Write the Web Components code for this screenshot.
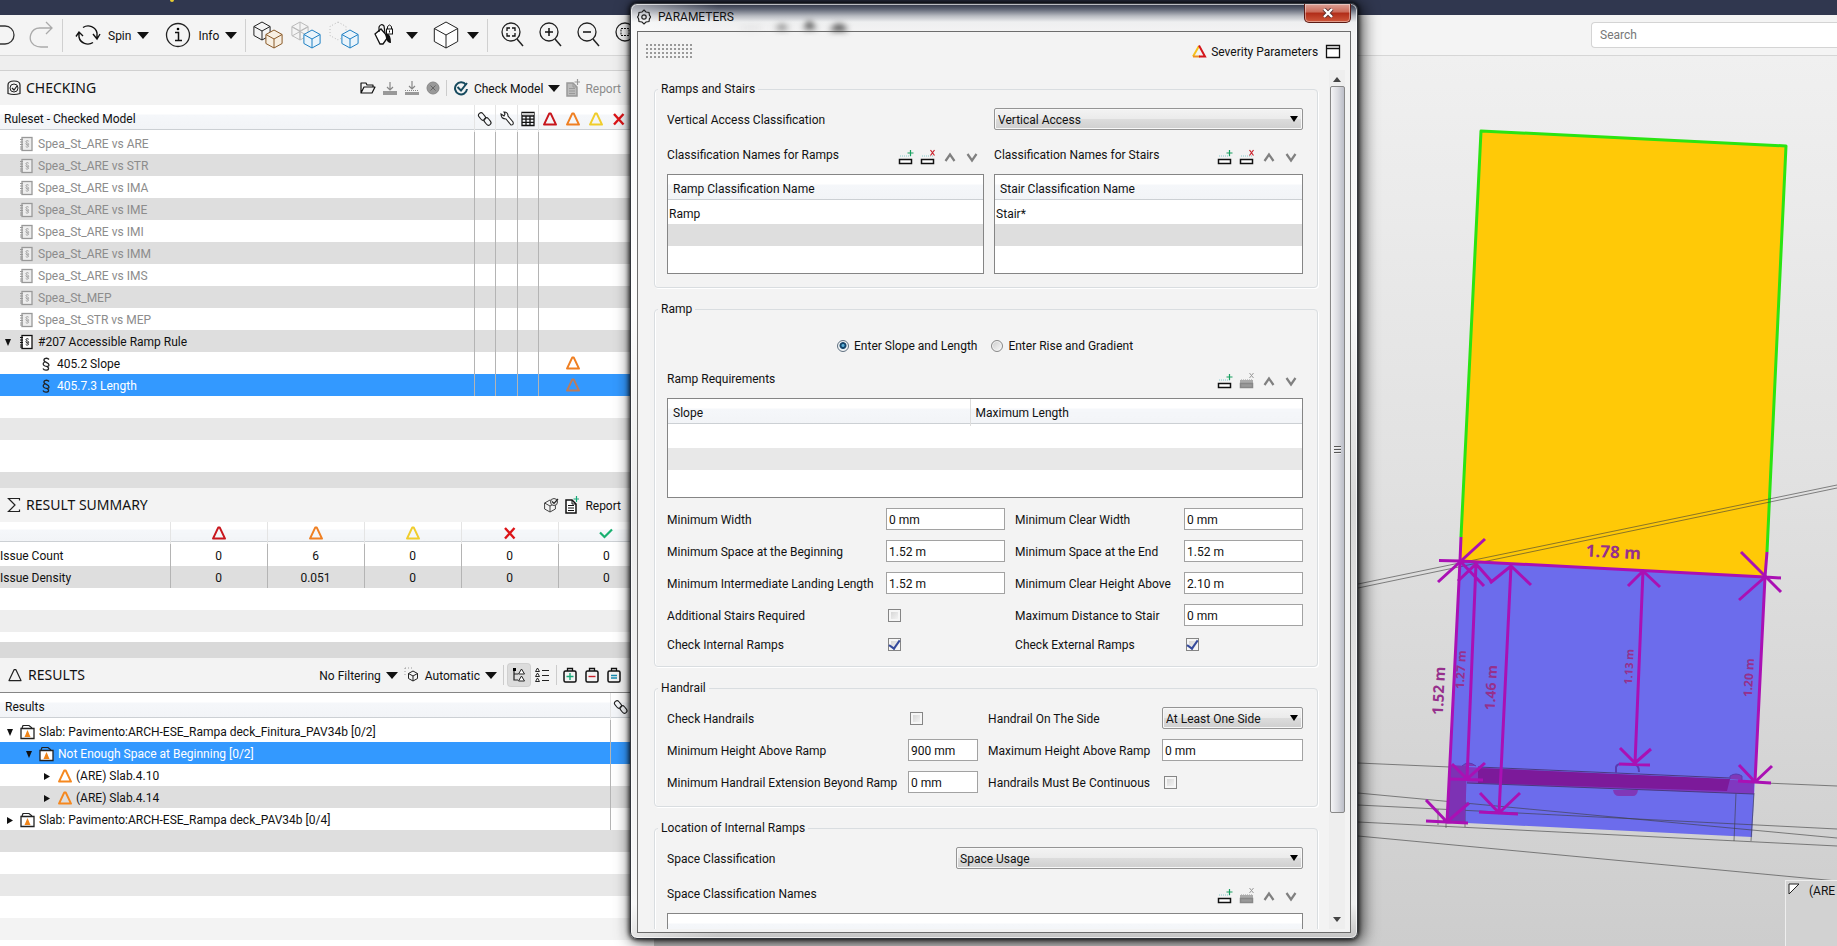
<!DOCTYPE html>
<html lang="en">
<head>
<meta charset="utf-8">
<title>Model Checking</title>
<style>
html,body{margin:0;height:100%}
body{font:12px/16px Roboto,"Noto Sans",sans-serif;color:#111;background:#f4f4f4;overflow:hidden}
</style>
</head>
<body>
<checker-app></checker-app>
<script>
const base = `*{box-sizing:border-box}
button{font:inherit;color:inherit;background:none;border:0;padding:0;margin:0;display:inline-flex;align-items:center;white-space:nowrap}
button span{padding-top:1px}
ui-icon{flex:none}`;

function define(name, html, setup) {
  const tpl = document.createElement('template');
  customElements.define(name, class extends HTMLElement {
    connectedCallback() {
      if (this.shadowRoot) return;
      const root = this.attachShadow({ mode: 'open' });
      tpl.innerHTML = '<style>' + base + '</style>' + (typeof html === 'function' ? html(this) : html);
      root.append(tpl.content.cloneNode(true));
      if (setup) setup(this, root);
    }
  });
}

/* ---------- icons: [width, height, markup] ---------- */
const tri = (c, w = 2) => [16, 16, `<path d="M7.2 2.6h1.6L14 13.6H2z" fill="none" stroke="${c}" stroke-width="${w}" stroke-linejoin="round"/>`];
const cubeAt = (x, y, r, c, fill = '#f4f4f4') => {
  const h = Math.round(r * 9) / 10, q = r / 2;
  return `<path d="M${x} ${y - r}l${h} ${q}v${r}l${-h} ${q}l${-h} ${-q}v${-r}z" fill="${fill}" stroke="${c}"/><path d="M${x - h} ${y - q}l${h} ${q}l${h} ${-q}M${x} ${y}v${r}" fill="none" stroke="${c}"/>`;
};
const lens = inner => [24, 26, `<circle cx="11" cy="10" r="9" fill="none" stroke="#222" stroke-width="1.3"/><path d="M17 17l6 7" stroke="#222" stroke-width="1.5"/>${inner}`];
const bag = (c, d) => [14, 16, `<rect x="1" y="4" width="12" height="11" rx="1.5" fill="none" stroke="#111" stroke-width="1.5"/><path d="M4.500 4V1.500h5V4" fill="none" stroke="#111" stroke-width="1.3"/><path d="${d}" stroke="${c}" stroke-width="1.4" fill="none"/>`];
const book = (c, f) => [14, 16, `<rect x="3" y="1.500" width="10" height="13" fill="${f}" stroke="${c}" stroke-width="1.300"/><path d="M1 3.500h3M1 6h3M1 8.500h3M1 11h3M1 13h3" stroke="${c}"/><path d="M9.700 5.300c-.6-1-3-.8-2.800.5.200 1.200 3 1.200 2.800 2.500-.1.900-1.800.9-2.400.3M7.300 7c-.9 1 .2 1.800 1.200 2.100 1.700.6 1.200 2-.2 2-.8 0-1.300-.300-1.600-.700" fill="none" stroke="${c}" stroke-width=".9"/>`];
const row = (box, mark, fill, dots) => [16, 18, `<path d="M2 8h11" stroke="${dots}" stroke-dasharray="1 1"/>${fill}<rect x="1.500" y="11.500" width="12" height="4" fill="${fill ? '#999' : '#fff'}" stroke="${box}" stroke-width="1.500"/>${mark}`];
const doc = (c, p) => [14, 18, `<path d="M1 4h6l4 4v9H1z" fill="${c === '#999' ? '#bbb' : '#fff'}" stroke="${c}" stroke-width="1.500"/><path d="M7 4v4h4M3 9.500h6M3 12h6M3 14.500h6" stroke="${c}" fill="none"/><path d="M11.500 0v6M8.500 3h6" stroke="${p}" stroke-width="1.200"/>`];
const folderTri = [16, 16, `<path d="M1 4.500h13v10H1z" fill="#fff" stroke="#222" stroke-width="1.300"/><path d="M2 4l1-2.500h6L12 4" fill="none" stroke="#222" stroke-width="1.200"/><path d="M7.500 6l3 7h-6z" fill="#f08418"/>`];
const icons = {
  undo: [18, 26, `<path d="M0 4h5a9 9 0 0 1 0 18H0" fill="none" stroke="#333" stroke-width="1.300"/>`],
  redo: [26, 28, `<path d="M24 7H12a9.500 9.500 0 0 0-6 17q3 2 7 2h7M18 1l6 6-6 6" fill="none" stroke="#aaa" stroke-width="1.300"/>`],
  spin: [26, 22, `<path d="M8 3.500a9 8.500 0 0 1 14 5.500v5M18 18.500a9 8.500 0 0 1-14-5.500V9M1 12.500L4 8l4 4M18 10l4 5 3-5" fill="none" stroke="#111" stroke-width="1.400"/>`],
  info: [26, 26, `<circle cx="13" cy="13" r="11.500" fill="none" stroke="#222" stroke-width="1.300"/><path d="M10 10.500h3.500v8M10 18.500h7" fill="none" stroke="#111" stroke-width="1.500"/><circle cx="13" cy="7" r="1.300"/>`],
  caret: [12, 8, `<path d="M0 1h12L6 8z" fill="#111"/>`],
  boxes1: [30, 28, cubeAt(9, 10, 9, '#222') + cubeAt(21, 18, 9, '#8a5a28', '#f7efe2')],
  boxes2: [30, 28, cubeAt(9, 10, 9, '#bbb') + `<path d="M1 6l16 9M17 6L1 15M9 1v18" stroke="#bbb"/>` + cubeAt(21, 18, 9, '#1f80c4', '#eaf4fb')],
  boxes3: [30, 28, `<path d="M9 1l8 4.500v9L9 19l-8-4.500v-9z" fill="none" stroke="#bbb" stroke-dasharray="1 2"/>` + cubeAt(21, 18, 9, '#1f80c4', '#eaf4fb')],
  paint: [22, 24, `<path d="M2 11l6-5 7 8-5 7H7z" fill="#fff" stroke="#111" stroke-width="1.300"/><path d="M6 9V4q2-4 5-1l1 7" fill="none" stroke="#111" stroke-width="1.200"/><path d="M12 11q6-2 6 9-4 0-5-5z" fill="#111"/><rect x="13.500" y="6" width="6" height="5" fill="#fff" stroke="#111"/><path d="M14.500 6V3.500q2-3 4 0V6M16.500 7.500v2" fill="none" stroke="#111"/>`],
  cube: [28, 28, cubeAt(14, 14, 13, '#222', '#fdfdfd')],
  zoomFit: lens('<path d="M7 9V6h3M12 6h3v3M15 11v3h-3M10 14H7v-3" fill="none" stroke="#111" stroke-width="1.300"/>'),
  zoomIn: lens('<path d="M11 6v8M7 10h8" stroke="#111" stroke-width="1.500"/>'),
  zoomOut: lens('<path d="M7 10h8" stroke="#111" stroke-width="1.500"/>'),
  zoomArea: lens('<path d="M7 6.500h8v7H7z" fill="none" stroke="#111" stroke-dasharray="2 1"/>'),
  checking: [14, 16, `<path d="M1 5q0-4 6-4t6 4v8.500q-6 2-12 0z" fill="none" stroke="#222" stroke-width="1.200"/><circle cx="7" cy="8" r="4" fill="none" stroke="#222"/><path d="M5 8l2 2 3-4" fill="none" stroke="#222" stroke-width="1.200"/>`],
  folder: [16, 16, `<path d="M1 13V3h5l1 2h6v2M1 13l3-6h11l-3 6z" fill="none" stroke="#111" stroke-width="1.200" stroke-linejoin="round"/>`],
  down1: [16, 16, `<path d="M1 11h14v4H1z" fill="#999"/><path d="M8 2v8M5 7l3 3 3-3" fill="none" stroke="#888" stroke-width="1.200"/>`],
  down2: [16, 16, `<path d="M1 12h14v3H1z" fill="#999"/><path d="M1 10.500h14" stroke="#888" stroke-dasharray="1 1"/><path d="M8 1v8M5 6l3 3 3-3" fill="none" stroke="#888" stroke-width="1.200"/>`],
  stop: [14, 16, `<circle cx="7" cy="8" r="6" fill="#999" stroke="#888"/><path d="M4.500 5.500l5 5M9.500 5.500l-5 5" stroke="#666"/>`],
  check: [16, 16, `<path d="M13 5a6 6 0 1 0 1 4" fill="none" stroke="#164a5e" stroke-width="2"/><path d="M4.500 7l3.500 3.500L14 3" fill="none" stroke="#164a5e" stroke-width="2"/>`],
  docGrey: doc('#999', '#999'),
  doc: doc('#111', '#18a878'),
  link: [16, 16, `<g fill="none" stroke="#222" stroke-width="1.100"><rect x="2.500" y="1.500" width="5" height="8" rx="2.500" transform="rotate(-40 5 5.500)"/><rect x="8" y="6.500" width="5" height="8" rx="2.500" transform="rotate(-40 10.500 10.500)"/></g>`],
  wrench: [16, 16, `<path d="M2 3l3 2 1-2-1-2q4 0 4 4l5 6q1 3-2 3L7 8q-5 0-5-5z" fill="#fff" stroke="#222" stroke-width="1.100"/>`],
  calc: [14, 16, `<path d="M1 1.500h12v13H1zM1 5h12M1 8.200h12M1 11.400h12M5 5v10M9 5v10" fill="none" stroke="#111" stroke-width="1.300"/><path d="M1 2h12v2H1z" fill="#ccc"/>`],
  red: tri('#c8161d'), orange: tri('#ef7f22'), yellow: tri('#f0cd2c'), orangeSel: tri('#bd7c5a'), black: tri('#222', 1.2),
  cross: [14, 16, `<path d="M2 3l9.500 10.500M11.500 3L2 13.500" stroke="#dc1418" stroke-width="2.400"/>`],
  tick: [16, 16, `<path d="M2 7.500l4.500 4.500L14 4.500" fill="none" stroke="#18b070" stroke-width="2.200"/>`],
  book: book('#111', '#fff'), bookGrey: book('#999', '#eee'),
  sect: [10, 16, `<path d="M8 3.500C6.500 1.500 2.500 2 3 4.500c.4 2 5 2 5 4.500 0 1.500-2 1.800-3 1.200M3.500 6C1 7.500 2.500 9.500 4 10c2.500.8 4 1.500 3.500 3-.6 1.800-4.500 1.500-5.500-.5" fill="none" stroke="#222" stroke-width="1.300"/>`],
  open: [8, 8, `<path d="M1 1h6L4 8z" fill="#111"/>`],
  closed: [8, 8, `<path d="M1 1v7l6-3.500z" fill="#111"/>`],
  sigma: [14, 16, `<path d="M12.500 3.500V1.500H1.500L8 8l-6.500 6.500h11v-2" fill="none" stroke="#222" stroke-width="1.200"/>`],
  boxCheck: [16, 16, cubeAt(7, 9, 6, '#444') + `<circle cx="11" cy="5" r="3.500" fill="#eee" stroke="#444"/><path d="M9 4.500l2 2L15 2" fill="none" stroke="#222" stroke-width="1.200"/>`],
  auto: [16, 16, `<path d="M1 1h7M1 1v7" stroke="#999" stroke-dasharray="1 2"/>` + cubeAt(9, 9, 5, '#222')],
  tree: [16, 16, `<path d="M3 3v10h4M3 7h4" fill="none" stroke="#222" stroke-width="1.200"/><rect x="2" y="1" width="3" height="3"/><path d="M10.500 2l3 5h-6zM10.500 9l3 5h-6z" fill="#fff" stroke="#222"/>`],
  list: [16, 16, `<path d="M3.500 1l2 3.500h-4zM3.500 6l2 3.500h-4zM3.500 11l2 3.500h-4z" fill="#fff" stroke="#222"/><path d="M8 3.500h7M8 8.500h7M8 13.500h7" stroke="#222" stroke-width="1.200"/>`],
  bagPlus: bag('#18a878', 'M7 6v7M3.500 9.500h7'), bagMinus: bag('#c8202a', 'M3.500 9.500h7'), bagEq: bag('#188ab0', 'M4 8.500h6M4 11h6'),
  folderTri,
  orangeTri: tri('#f5881f'),
  gear: [14, 16, `<path d="M7 1l2 2 3 .5.500 3L14 8l-1.500 1.500-.5 3-3 .5-2 2-2-2-3-.5-.5-3L0.500 8l1-1.500.5-3L5 3z" fill="none" stroke="#222" stroke-width="1.200"/><circle cx="7" cy="8" r="2.200" fill="none" stroke="#222" stroke-width="1.200"/>`],
  severity: [16, 16, `<path d="M8 3L2 13.500" stroke="#f4c21c" stroke-width="2" fill="none"/><path d="M2 13.500h7" stroke="#ef9022" stroke-width="2"/><path d="M8 2.500L14 13.500H8" fill="none" stroke="#d4161c" stroke-width="2"/>`],
  win: [16, 16, `<path d="M1.500 2.500h13v12h-13zM1.500 5.500h13" fill="#fff" stroke="#111" stroke-width="1.300"/>`],
  rowAdd: row('#111', '<path d="M12.500 2v6M9.500 5h6" stroke="#18a060" stroke-width="1.200"/>', '', '#8cc'),
  rowDel: row('#111', '<path d="M10.500 2l4 5.500M14.500 2l-4 5.500" stroke="#c8202a" stroke-width="1.200"/>', '', '#8cc'),
  rowDelOff: row('#888', '<path d="M10.500 1l4 5M14.500 1l-4 5" stroke="#999"/>', '<path d="M1 8h13v4H1z" fill="#aaa"/>', '#999'),
  up: [16, 18, `<path d="M3.500 13L8 6.500l4.500 6.500" fill="none" stroke="#808080" stroke-width="2.200"/>`],
  dn: [16, 18, `<path d="M3.500 6L8 12.500 12.500 6" fill="none" stroke="#808080" stroke-width="2.200"/>`]
};
define('ui-icon', el => {
  const [w, h, m] = icons[el.getAttribute('name')];
  return `<style>:host{display:block;width:${w}px;height:${h}px}svg{display:block}</style><svg width="${w}" height="${h}" viewBox="0 0 ${w} ${h}" aria-hidden="true">${m}</svg>`;
});
const ic = n => `<ui-icon name="${n}"></ui-icon>`;

/* ---------- main toolbar ---------- */
define('main-toolbar', `<style>
:host{display:flex;align-items:center;height:41px;background:#f4f4f4;border-bottom:1px solid #d6d6d6}
i{width:1px;height:33px;background:#d0d0d0;margin:0 12px 0 8px;flex:none}
.t{gap:7px}.t ui-icon:last-child{margin-left:-1px}
input{margin-left:auto;width:246px;height:26px;border:1px solid #d4d4d4;border-right:0;border-radius:4px 0 0 4px;background:#fff;font:inherit;padding:0 8px;outline:0}
input::placeholder{color:#777;opacity:1}
.a{margin-left:10px}.b{margin-left:8px}.c{margin-left:14px}
.t+.t{margin-left:16px}
.t+i{margin-right:7px}
</style>
<button aria-label="Undo">${ic('undo')}</button><button class="a" aria-label="Redo">${ic('redo')}</button><i></i>
<button class="t">${ic('spin')}<span>Spin</span>${ic('caret')}</button>
<button class="t">${ic('info')}<span>Info</span>${ic('caret')}</button><i></i>
<button aria-label="Show components">${ic('boxes1')}</button><button class="b" aria-label="Transparent">${ic('boxes2')}</button><button class="b" aria-label="Hidden">${ic('boxes3')}</button>
<button class="c" aria-label="Paint" style="gap:11px">${ic('paint')}${ic('caret')}</button>
<button class="c" aria-label="View" style="gap:7px">${ic('cube')}${ic('caret')}</button><i></i>
<button aria-label="Zoom to fit">${ic('zoomFit')}</button><button class="c" aria-label="Zoom in">${ic('zoomIn')}</button><button class="c" aria-label="Zoom out">${ic('zoomOut')}</button><button class="c" aria-label="Zoom area">${ic('zoomArea')}</button>
<input type="search" aria-label="Search" placeholder="Search">`);

/* ---------- panel header ---------- */
define('panel-head', el => `<style>
:host{display:flex;align-items:center;height:34px;background:#f3f3f3;padding:0 33px 0 7px}
h2{font:14px/18px "Noto Sans",sans-serif;margin:0 auto 0 5px;white-space:nowrap}
div{display:flex;align-items:center;gap:6px}
</style>${ic(el.getAttribute('icon'))}<h2>${el.getAttribute('label')}</h2><div><slot></slot></div>`);

const treeCss = `
:host{display:block;background:#fff}
table{width:100%;border-collapse:collapse;table-layout:fixed}
th{height:27px;padding:0;font-weight:400;text-align:left;background:linear-gradient(#fff 0 9px,#f5f7fa 10px,#f2f4f7 24px,#ccd0d4 24px 25px,#fff 25px);border-left:1px solid #e4e4e4}
th:first-child,td:first-child{border-left:0}
td{height:22px;padding:0;border-left:1px solid #b4b4b4;white-space:nowrap}
th ui-icon,.c ui-icon{margin:0 auto}
tr.g{background:#dedede}tr.s{background:#3399ff;color:#fff}
.n{display:flex;align-items:center;padding-top:1px}
.x{border-left:0}
`;
const sep = '<i class="sep"></i>';

define('rules-panel', () => {
  const names = ['ARE vs ARE','ARE vs STR','ARE vs IMA','ARE vs IME','ARE vs IMI','ARE vs IMM','ARE vs IMS','MEP','STR vs MEP'];
  const tail = '<td></td><td></td><td></td><td></td><td class="x c"></td><td class="x"></td><td class="x"></td><td class="x"></td>';
  const hot = i => tail.replace('<td class="x c">', '<td class="x c">' + ic(i));
  return `<style>${treeCss}
th:first-child{padding:1px 0 0 4px}
.n{gap:5px;padding-left:19px}.n.o{padding-left:4px}.n.o ui-icon:first-child{margin-right:2px}.n.k{padding-left:41px;gap:6px}
.d{color:#8c8c8c}
.fill{height:76px;background:linear-gradient(#fff 22px,#e8e8e8 22px 44px,#fff 44px)}
.sep{width:1px;height:16px;background:#ccc}
button{gap:5px}
</style>
<panel-head icon="checking" label="CHECKING">
<button aria-label="Open">${ic('folder')}</button><button aria-label="Load">${ic('down1')}</button><button aria-label="Save">${ic('down2')}</button><button aria-label="Stop">${ic('stop')}</button>${sep}
<button>${ic('check')}<span>Check Model</span>${ic('caret')}</button><button class="d">${ic('docGrey')}<span>Report</span></button></panel-head>
<table><colgroup><col><col style="width:21px"><col style="width:22px"><col style="width:21px"><col style="width:23px"><col style="width:23px"><col style="width:23px"><col style="width:23px"><col style="width:23px"></colgroup>
<thead><tr><th>Ruleset - Checked Model</th><th>${ic('link')}</th><th>${ic('wrench')}</th><th>${ic('calc')}</th><th>${ic('red')}</th><th class="x">${ic('orange')}</th><th class="x">${ic('yellow')}</th><th class="x">${ic('cross')}</th><th class="x"></th></tr></thead><tbody>
${names.map((n, i) => `<tr class="${i % 2 ? 'g' : ''}"><td><div class="n d">${ic('bookGrey')}Spea_St_${n}</div></td>${tail}</tr>`).join('')}
<tr class="g"><td><div class="n o">${ic('open')}${ic('book')}#207 Accessible Ramp Rule</div></td>${tail}</tr>
<tr><td><div class="n k">${ic('sect')}405.2 Slope</div></td>${hot('orange')}</tr>
<tr class="s"><td><div class="n k">${ic('sect')}405.7.3 Length</div></td>${hot('orangeSel')}</tr>
</tbody></table><div class="fill"></div>`;
});

define('summary-panel', `<style>${treeCss}
th{height:22px;background:linear-gradient(#fff 0 7px,#f5f7fa 8px,#f2f4f7 19px,#ccd0d4 19px 20px,#fff 20px)}
td{text-align:center;padding-top:1px}tbody th{height:22px;padding-top:1px;background:none;border:0}
button{gap:6px}
.fill{height:54px;background:linear-gradient(#fff 22px,#eee 22px 44px,#fff 44px)}
</style>
<panel-head icon="sigma" label="RESULT SUMMARY"><button aria-label="Add to presentation">${ic('boxCheck')}</button><button>${ic('doc')}<span>Report</span></button></panel-head>
<table><colgroup><col><col style="width:97px"><col style="width:97px"><col style="width:97px"><col style="width:97px"><col style="width:96px"></colgroup>
<thead><tr><th></th><th>${ic('red')}</th><th>${ic('orange')}</th><th>${ic('yellow')}</th><th>${ic('cross')}</th><th>${ic('tick')}</th></tr></thead>
<tbody><tr><th scope="row">Issue Count</th><td>0</td><td>6</td><td>0</td><td>0</td><td>0</td></tr>
<tr class="g"><th scope="row">Issue Density</th><td>0</td><td>0.051</td><td>0</td><td>0</td><td>0</td></tr></tbody></table><div class="fill"></div>`);

define('results-panel', `<style>${treeCss}
panel-head{border-bottom:1px solid #858585;height:35px}
th:first-child{padding:1px 0 0 5px}
.n{gap:3px;padding-left:6px}.n ui-icon:first-child{margin-right:3px}
.l1{padding-left:25px}.l2{padding-left:43px}
.sep{width:1px;height:20px;background:#ccc}
.on{background:#dcdcdc;border-radius:3px;padding:3px;box-shadow:0 0 0 1px #d0d0d0;margin:0 -2px}
.m{margin-left:2px}
button{gap:5px}
.fill{height:110px;background:linear-gradient(#dedede 22px,#fff 22px 44px,#e8e8e8 44px 66px,#fff 66px 88px,#f3f3f3 88px)}
</style>
<panel-head icon="black" label="RESULTS">
<button><span>No Filtering</span>${ic('caret')}</button><button>${ic('auto')}<span>Automatic</span>${ic('caret')}</button>${sep}
<button class="on" aria-label="Tree view">${ic('tree')}</button><button aria-label="List view">${ic('list')}</button>${sep}
<button aria-label="Add">${ic('bagPlus')}</button><button class="m" aria-label="Remove">${ic('bagMinus')}</button><button class="m" aria-label="Set">${ic('bagEq')}</button></panel-head>
<table><colgroup><col><col style="width:44px"></colgroup>
<thead><tr><th>Results</th><th><ui-icon name="link" style="margin:0 2px"></ui-icon></th></tr></thead><tbody>
<tr><td><div class="n">${ic('open')}${ic('folderTri')}Slab: Pavimento:ARCH-ESE_Rampa deck_Finitura_PAV34b [0/2]</div></td><td></td></tr>
<tr class="s"><td><div class="n l1">${ic('open')}${ic('folderTri')}Not Enough Space at Beginning [0/2]</div></td><td></td></tr>
<tr><td><div class="n l2">${ic('closed')}${ic('orangeTri')}(ARE) Slab.4.10</div></td><td></td></tr>
<tr class="g"><td><div class="n l2">${ic('closed')}${ic('orangeTri')}(ARE) Slab.4.14</div></td><td></td></tr>
<tr><td><div class="n">${ic('closed')}${ic('folderTri')}Slab: Pavimento:ARCH-ESE_Rampa deck_PAV34b [0/4]</div></td><td></td></tr>
</tbody></table><div class="fill"></div>`);

/* ---------- 3D view ---------- */
define('model-view', `<style>
:host{display:block;overflow:hidden;background:linear-gradient(#f0f0f0,#e2e2e2 45%,#cdcdcd);position:relative}
svg.v{display:block;width:100%;height:100%}
text{font-family:"Noto Sans",sans-serif;font-weight:700;fill:#96308c;text-anchor:middle}
.tag{position:absolute;right:0;bottom:0;width:52px;height:66px;border:1px solid #eee;border-width:1px 0 0 1px;background:#d2d2d2;display:flex;padding:2px 0 0 2px;gap:9px;white-space:nowrap}
.tag svg{flex:none}
</style>
<svg class="v" viewBox="654 56 1183 890" aria-label="Ramp model">
<path d="M1460 561L1765 577L1752 837L1447 822z" fill="#6c6cec"/>
<path d="M1481 131L1786 146L1765 577L1460 561z" fill="#ffc907"/>
<path d="M1461 537L1481 131L1786 146L1767 552" fill="none" stroke="#2be412" stroke-width="3" stroke-linejoin="round"/>
<g fill="none" stroke="#3c3c3c" stroke-opacity=".6" stroke-width="1">
<path d="M1358 584L1837 485M1358 588L1837 488"/>
<path d="M1358 763L1450 767M1765 783L1837 786M1358 793L1837 838M1358 805L1837 829M1358 822L1837 846M1358 836L1837 881"/>
<path d="M1465 790V827M1438 809v16M1446 820v8M1736 793L1734 841M1754 793L1751 841"/>
</g>
<path d="M1450 765l17 1-2 57-18-1z" fill="#7d32b4"/>
<path d="M1467 767L1754 781L1754 794L1467 783z" fill="#8038c0"/>
<path d="M1478 768L1730 779L1727 791L1478 783z" fill="#7c1a9a"/>
<path d="M1478 767L1730 778M1467 783L1754 794" stroke="#4a3a80" fill="none"/>
<path d="M1613 790h25q-1 6-5 6h-14q-5 0-6-6z" fill="#8038b8"/>
<path d="M1616 773v-6q1-3 5-3h12q6 0 6 8" fill="none" stroke="#5a3ab0" stroke-width="2"/>
<path d="M1730 779v-3q6-4 12 0v4M1462 766q6-6 14 0" fill="#8038b8" stroke="#5a3ab0"/>
<g fill="none" stroke="#aa10b4" stroke-width="3">
<path d="M1461 537L1460 561L1447 822M1439 560.500L1460 561L1765 577l16 1M1767 552L1765 577L1755 782"/>
<path d="M1485 539L1438 582M1460 561l24 25M1741 552l40 40M1765 577l-26 23"/>
<path d="M1476 564L1467 779M1458 581l18-17 16 18M1452 764l15 15 18-16M1450 779l33 1"/>
<path d="M1511 566L1499 813M1490 583l21-17 20 19M1480 793l19 20 21-20M1479 812l39 2"/>
<path d="M1643 571L1635 763M1628 586l15-15 17 16M1620 748l15 15 16-14M1619 764l31 1"/>
<path d="M1739 765l16 17 17-16M1738 781l33 2"/>
<path d="M1426 800l21 22 22-19M1426 821l42 2"/>
</g>
<text font-size="17" transform="translate(1613 558) rotate(3)">1.78 m</text>
<text font-size="15" transform="translate(1444 691) rotate(-87)">1.52 m</text>
<text font-size="12" transform="translate(1465 670) rotate(-87)">1.27 m</text>
<text font-size="14" transform="translate(1496 688) rotate(-87)">1.46 m</text>
<text font-size="11" transform="translate(1633 667) rotate(-87)">1.13 m</text>
<text font-size="12" transform="translate(1753 678) rotate(-87)">1.20 m</text>
</svg>
<div class="tag"><svg width="12" height="12"><path d="M1 1h10L1 11z" fill="#fff" stroke="#222"/></svg><span>(ARE</span></div>`);

/* ---------- form parts ---------- */
let uid = 0;
define('form-field', el => {
  const id = 'f' + (++uid), t = el.getAttribute('type') || 'text', v = el.getAttribute('value') || '';
  const c = t === 'select'
    ? `<span class="w"><select id="${id}"><option>${v}</option></select><svg width="8" height="6"><path d="M0 0h8L4 6z"/></svg></span>`
    : t === 'check' ? `<input type="checkbox" id="${id}" ${el.hasAttribute('checked') ? 'checked' : ''}>`
    : `<input type="text" id="${id}" value="${v}">`;
  return `<style>:host{display:contents}
label{white-space:nowrap;align-self:center;padding-top:1px;${el.hasAttribute('second') ? 'padding-left:10px' : ''}}
input[type=text]{width:100%;min-width:0;height:22px;border:1px solid #a2a2a2;background:#fff;font:inherit;color:inherit;padding:1px 2px 0;margin:0;outline:0}
.w{display:grid;align-items:center;min-width:0}
select{grid-area:1/1;appearance:none;width:100%;min-width:0;height:22px;border:1px solid #949494;border-radius:2px;background:linear-gradient(#f3f3f3,#ebebeb 48%,#dcdcdc 52%,#cfcfcf);box-shadow:inset 0 0 0 1px #f8f8f8;font:inherit;color:inherit;padding:1px 20px 0 3px;margin:0}
.w svg{grid-area:1/1;justify-self:end;margin-right:5px;pointer-events:none}
input[type=checkbox]{appearance:none;width:13px;height:13px;margin:0 0 0 2px;align-self:center;border:1px solid #858585;background:linear-gradient(135deg,#cfcfcf,#fafafa);box-shadow:inset 0 0 0 2px #f6f6f6;display:grid;place-items:center}
input:checked::before{content:"";width:5px;height:9px;border:solid #354a9c;border-width:0 2px 2px 0;transform:rotate(35deg);margin-top:-3px}
</style><label for="${id}">${el.getAttribute('label')}</label>${c}`;
});
define('list-head', el => `<style>:host{display:flex;justify-content:space-between;height:44px;padding:14px 0 8px}
span{line-height:20px;padding-top:1px;white-space:nowrap}
div{display:flex;gap:6px;align-items:flex-end;padding-right:4px}</style>
<span>${el.getAttribute('label')}</span><div><button aria-label="Add row">${ic('rowAdd')}</button><button aria-label="Delete row">${ic(el.hasAttribute('off') ? 'rowDelOff' : 'rowDel')}</button><button aria-label="Move up">${ic('up')}</button><button aria-label="Move down">${ic('dn')}</button></div>`);
define('list-table', el => {
  const cols = (el.getAttribute('cols') || '').split('|'), v = el.getAttribute('value');
  return `<style>:host{display:block;height:100px;border:1px solid #858585;--g:${v ? '#dedede' : '#e8e8e8'};background:linear-gradient(#fff 49px,var(--g) 49px 71px,#fff 71px)}
table{border-collapse:collapse;width:100%;table-layout:fixed}
th{height:27px;padding:1px 5px 0;text-align:left;font-weight:400;background:linear-gradient(#fff 0 9px,#f5f7fa 10px,#f2f4f7 24px,#ccd0d4 24px 25px,#fff 25px)}
th+th{border-left:1px solid #ddd}th:first-child{${cols.length > 1 ? 'width:302px' : ''}}
td{height:22px;padding:1px 1px 0}</style>
<table><thead><tr>${cols.map(c => `<th>${c}</th>`).join('')}</tr></thead><tbody>${v ? `<tr><td>${v}</td></tr>` : ''}</tbody></table>`;
});

/* ---------- dialog ---------- */
define('parameters-dialog', `<style>
:host{display:flex;flex-direction:column;border:1px solid #33363c;border-radius:7px;padding:0 6px 5px;
background:linear-gradient(90deg,#ffffff88,#ffffff00 12%),linear-gradient(#2e3344,#5c6272 5px,#b8bbc2 12px,#eeeff0 18px,#f4f4f4 30px,#fafafa 300px,#d8d8d8 500px,#f0f0f0 900px,#c4c4c4);
box-shadow:0 0 4px 1px rgba(0,0,0,.8),3px 2px 16px 2px rgba(0,0,0,.7),inset 0 0 0 1px #ffffffaa}
header{display:flex;height:27px;flex:none;align-items:flex-start;position:relative}
header ui-icon{margin-top:5px}
h1{font:inherit;margin:5px auto 0 7px}
.blur{position:absolute;left:100px;bottom:0;filter:blur(3px)}
.close{width:47px;height:19px;justify-content:center;border:1px solid #5a1a14;border-top:0;border-radius:0 0 5px 5px;background:linear-gradient(#dba096,#cb6a58 45%,#b02c18 50%,#d0583c);box-shadow:inset 0 0 0 1px #ffffff66}
main{flex:1;min-height:0;border:1px solid #6c6c6c;background:#f3f3f3;display:flex;flex-direction:column}
.bar{height:38px;flex:none;display:flex;align-items:center;padding:0 9px 0 8px}
.grip{width:46px;height:15px;background:radial-gradient(circle at 1px 1px,#999 1px,transparent 1px) 0 0/4px 4px}
.bar button{margin-left:auto;gap:4px}.bar button+button{margin-left:7px}
.body{flex:1;min-height:0;display:flex;padding:0 5px 3px 0}
.scroll{flex:1;min-width:0;overflow:hidden;padding:11px 11px 0 16px}
.track{width:16px;flex:none;background:#eee;display:flex;flex-direction:column;align-items:center;justify-content:space-between;padding:7px 0}
.thumb{width:15px;flex:0 1 727px;min-height:0;margin:4px 0 auto;border:1px solid #888;border-radius:2px;background:linear-gradient(90deg,#f4f4f6,#dcdde2 50%,#bcbec8);display:grid;place-items:center}
.thumb::before{content:"";width:7px;height:8px;background:repeating-linear-gradient(#555 0 1px,#eee 1px 2px,transparent 2px 3px)}
fieldset{min-width:0;margin:0 0 13px;border:1px solid #d9dde0;border-radius:4px;padding:11px 14px 13px 12px;box-shadow:inset 1px 0 #fff,1px 1px #fff}
legend{padding:1px 3px 0;margin-left:-9px;line-height:15px}
.g{display:grid;row-gap:10px}
.two{grid-template-columns:minmax(0,327fr) minmax(0,309fr)}
.lists{display:grid;grid-template-columns:minmax(0,317fr) minmax(0,309fr);column-gap:10px}
.radios{display:flex;justify-content:center;gap:14px;padding:10px 0 0 0;height:26px}
.radios label{display:flex;align-items:center;gap:5px;line-height:16px;height:16px}
input[type=radio]{appearance:none;width:12px;height:12px;margin:0;border:1px solid #888;border-radius:50%;background:linear-gradient(135deg,#ccc,#fafafa);box-shadow:inset 0 0 0 1px #f4f4f4}
input[type=radio]:checked{background:radial-gradient(circle at 50% 45%,#5cb0d8 0 1px,#14466c 2px 3px,#e8f0f4 4px);border-color:#607080}
.f{margin-top:10px;grid-template-columns:minmax(0,219fr) minmax(0,119fr) minmax(0,179fr) minmax(0,119fr);grid-template-rows:repeat(4,22px) 17px}
.h{grid-template-columns:minmax(0,241fr) minmax(0,70fr) minmax(0,184fr) minmax(0,141fr);grid-auto-rows:22px}
.s{grid-template-columns:minmax(0,289fr) minmax(0,347fr)}
</style>
<header>${ic('gear')}<h1>PARAMETERS</h1>
<svg class="blur" width="110" height="12"><path d="M4 9h20M38 10q7-8 14 0zM66 10l6-9 8 9zM92 12q10-14 20 0z" fill="#333" stroke="#bbb"/></svg>
<button class="close" aria-label="Close"><svg width="12" height="10"><path d="M2 1l8 8M10 1L2 9" stroke="#5a3030" stroke-width="4"/><path d="M2 1l8 8M10 1L2 9" stroke="#fff" stroke-width="2.400"/></svg></button></header>
<main><div class="bar"><div class="grip"></div><button>${ic('severity')}<span>Severity Parameters</span></button><button aria-label="Maximize">${ic('win')}</button></div>
<div class="body"><div class="scroll">
<fieldset><legend>Ramps and Stairs</legend>
<div class="g two"><form-field type="select" label="Vertical Access Classification" value="Vertical Access"></form-field></div>
<div class="lists"><list-head label="Classification Names for Ramps"></list-head><list-head label="Classification Names for Stairs"></list-head>
<list-table cols="Ramp Classification Name" value="Ramp"></list-table><list-table cols="Stair Classification Name" value="Stair*"></list-table></div></fieldset>
<fieldset><legend>Ramp</legend>
<div class="radios"><label><input type="radio" name="mode" checked>Enter Slope and Length</label><label><input type="radio" name="mode">Enter Rise and Gradient</label></div>
<list-head off label="Ramp Requirements"></list-head><list-table cols="Slope|Maximum Length"></list-table>
<div class="g f">
<form-field label="Minimum Width" value="0 mm"></form-field><form-field second label="Minimum Clear Width" value="0 mm"></form-field>
<form-field label="Minimum Space at the Beginning" value="1.52 m"></form-field><form-field second label="Minimum Space at the End" value="1.52 m"></form-field>
<form-field label="Minimum Intermediate Landing Length" value="1.52 m"></form-field><form-field second label="Minimum Clear Height Above" value="2.10 m"></form-field>
<form-field type="check" label="Additional Stairs Required"></form-field><form-field second label="Maximum Distance to Stair" value="0 mm"></form-field>
<form-field type="check" checked label="Check Internal Ramps"></form-field><form-field type="check" checked second label="Check External Ramps"></form-field>
</div></fieldset>
<fieldset><legend>Handrail</legend><div class="g h">
<form-field type="check" label="Check Handrails"></form-field><form-field second type="select" label="Handrail On The Side" value="At Least One Side"></form-field>
<form-field label="Minimum Height Above Ramp" value="900 mm"></form-field><form-field second label="Maximum Height Above Ramp" value="0 mm"></form-field>
<form-field label="Minimum Handrail Extension Beyond Ramp" value="0 mm"></form-field><form-field second type="check" label="Handrails Must Be Continuous"></form-field>
</div></fieldset>
<fieldset><legend>Location of Internal Ramps</legend>
<div class="g s"><form-field type="select" label="Space Classification" value="Space Usage"></form-field></div>
<list-head off label="Space Classification Names"></list-head><list-table></list-table></fieldset>
</div><div class="track"><svg width="8" height="5"><path d="M0 5h8L4 0z" fill="#444"/></svg><div class="thumb"></div><svg width="8" height="5"><path d="M0 0h8L4 5z" fill="#444"/></svg></div></div></main>`);

/* ---------- page ---------- */
define('checker-app', `<style>
:host{display:flex;flex-direction:column;height:100vh;position:relative;overflow:hidden}
.top{height:15px;flex:none;background:#30374f;padding-left:170px}
.top::before{content:"";display:block;width:4px;height:2px;border-radius:0 0 2px 2px;background:#e8cc30}
.work{flex:1;min-height:0;display:grid;grid-template-columns:minmax(0,654fr) minmax(0,1183fr)}
.left{display:flex;flex-direction:column;background:#fff;overflow:hidden}
.strip{height:15px;flex:none;background:#eee;border-bottom:1px solid #d0d0d0}
.split{height:16px;flex:none;background:#dedede}
.split+summary-panel+.split{background:#d9d9d9}
rules-panel,summary-panel,results-panel{flex:none}
parameters-dialog{position:absolute;left:34.3%;width:39.63%;top:3px;bottom:7px}
</style>
<div class="top"></div><main-toolbar></main-toolbar>
<div class="work"><div class="left"><div class="strip"></div><rules-panel></rules-panel><div class="split"></div><summary-panel></summary-panel><div class="split"></div><results-panel></results-panel></div><model-view></model-view></div>
<parameters-dialog></parameters-dialog>`);
</script>
</body>
</html>
